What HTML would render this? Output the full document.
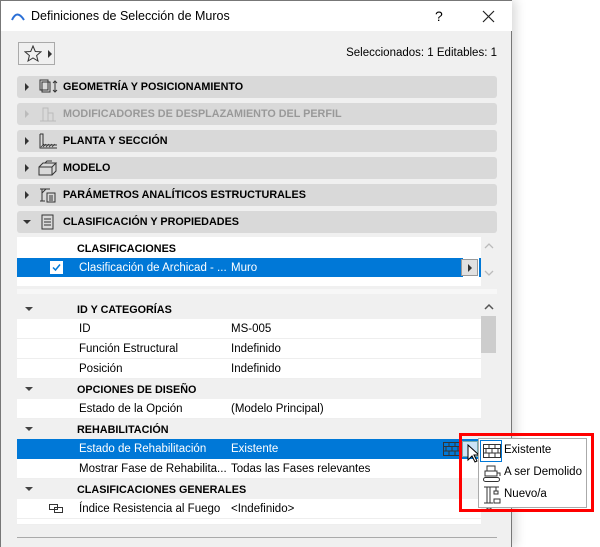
<!DOCTYPE html>
<html><head><meta charset="utf-8"><style>
*{box-sizing:border-box;margin:0;padding:0}
body{width:600px;height:547px;background:#fff;font-family:"Liberation Sans",sans-serif;font-size:11.5px;color:#000;position:relative;overflow:hidden}
.win{position:absolute;left:0;top:0;width:512px;height:547px;background:#f0f0f0;border-left:1px solid #777;border-right:1px solid #777;box-shadow:4px 0 10px rgba(0,0,0,.15)}
.title{position:absolute;left:0;top:0;width:511px;height:31px;background:#fff;border-top:1px solid #777}
.title span{position:absolute;left:30px;top:8px;font-size:12.5px}
.bar{position:absolute;left:16px;width:480px;height:22px;background:#d9d9d9;border-radius:3px;font-weight:bold;font-size:10.8px}
.bar .t{position:absolute;left:46px;top:5px}
.bar .a{position:absolute;left:8px;top:7px;width:0;height:0;border-left:4px solid #333;border-top:4px solid transparent;border-bottom:4px solid transparent}
.bar .d{position:absolute;left:6px;top:9px;border-top:4px solid #333;border-left:4px solid transparent;border-right:4px solid transparent}
.bar svg{position:absolute;left:20px;top:2px}
.row{position:absolute;left:16px;width:464px;height:20px;background:#fff;border-bottom:1px solid #eee}
.row.h{background:#f0f0f0;font-weight:bold;font-size:10.8px;border-bottom:none}
.row .l{position:absolute;left:62px;top:4px}
.row.h .l{left:60px;top:5px}
.row .v{position:absolute;left:214px;top:4px}
.row .d{position:absolute;left:8px;top:8px;border-top:4px solid #444;border-left:4px solid transparent;border-right:4px solid transparent}
.sel{background:#0078d7;color:#fff}
</style></head><body>
<div class="win">
<div class="title">
<svg style="position:absolute;left:10px;top:10px" width="14" height="10"><path d="M1 9 Q6 -2 13 9" fill="none" stroke="#2a6fd6" stroke-width="2"/></svg>
<span>Definiciones de Selección de Muros</span>
<span style="left:434px;top:7px;font-size:14px">?</span>
<svg style="position:absolute;left:481px;top:9px" width="13" height="13"><path d="M1 1L12 12M12 1L1 12" stroke="#222" stroke-width="1.2"/></svg>
</div>
<div style="position:absolute;left:17px;top:42px;width:37px;height:23px;border:1px solid #aaa;background:#f0f0f0">
<svg style="position:absolute;left:5px;top:2px" width="18" height="17"><path d="M9 1L11.3 6.5L17 6.8L12.6 10.5L14 16L9 13L4 16L5.4 10.5L1 6.8L6.7 6.5Z" fill="none" stroke="#333"/></svg>
<div style="position:absolute;left:29px;top:7px;border-left:4px solid #333;border-top:4px solid transparent;border-bottom:4px solid transparent"></div>
</div>
<div style="position:absolute;right:14px;top:47px;font-size:11.5px">Seleccionados: 1 Editables: 1</div>

<div class="bar" style="top:76px"><i class="a"></i><svg width="22" height="18"><rect x="3" y="2" width="8" height="10" fill="none" stroke="#333"/><rect x="5" y="4" width="8" height="10" fill="none" stroke="#333"/><path d="M18 3v11M16 5l2-2 2 2M16 12l2 2 2-2" stroke="#333" fill="none"/></svg><span class="t">GEOMETRÍA Y POSICIONAMIENTO</span></div>
<div class="bar" style="top:103px;color:#999"><i class="a" style="border-left-color:#bbb"></i><svg width="22" height="18"><path d="M6 16V3h5v13M11 8h5v8M3 16h16" stroke="#bbb" fill="none"/></svg><span class="t">MODIFICADORES DE DESPLAZAMIENTO DEL PERFIL</span></div>
<div class="bar" style="top:130px"><i class="a"></i><svg width="22" height="18"><path d="M3 2v14h17M3 2h3v11h14" stroke="#333" fill="none"/><path d="M4 15l3-3M6 15l3-3M9 15l3-3M12 15l3-3M15 15l3-3" stroke="#333" stroke-width=".8"/></svg><span class="t">PLANTA Y SECCIÓN</span></div>
<div class="bar" style="top:157px"><i class="a"></i><svg width="22" height="18"><path d="M2 8h13v8H2zM2 8l4-4h13l-4 4M19 4v8l-4 4M8 4l2-2h5" stroke="#333" fill="none"/></svg><span class="t">MODELO</span></div>
<div class="bar" style="top:184px"><i class="a"></i><svg width="22" height="18"><path d="M3 3h10M5 3v12M3 15h5M5 7l4-4" stroke="#333" fill="none"/><rect x="10" y="7" width="8" height="9" fill="none" stroke="#333"/><path d="M12 10h4M12 12h4M12 14h4" stroke="#333"/></svg><span class="t">PARÁMETROS ANALÍTICOS ESTRUCTURALES</span></div>
<div class="bar" style="top:211px"><i class="d"></i><svg width="22" height="18"><rect x="5" y="2" width="11" height="14" fill="none" stroke="#333"/><path d="M7 6h7M7 9h7M7 12h7" stroke="#333"/></svg><span class="t">CLASIFICACIÓN Y PROPIEDADES</span></div>

<div style="position:absolute;left:16px;top:237px;width:464px;height:49px;background:#fff"></div>
<div class="row h" style="top:238px;background:transparent"><span class="l">CLASIFICACIONES</span></div>
<div class="row sel" style="top:258px;height:19px;width:446px;border:none"><svg style="position:absolute;left:33px;top:3px" width="13" height="13"><rect x=".5" y=".5" width="12" height="12" fill="#fff" stroke="#fff"/><path d="M3 6.5l2.5 2.5L10 3.5" stroke="#0078d7" stroke-width="1.5" fill="none"/></svg><span class="l">Clasificación de Archicad - ...</span><span class="v">Muro</span></div>
<div style="position:absolute;left:460px;top:259px;width:17px;height:17px;border:1px solid #999;background:#e1e1e1"><div style="position:absolute;left:6px;top:4px;border-left:4px solid #333;border-top:4px solid transparent;border-bottom:4px solid transparent"></div></div>
<div style="position:absolute;left:478px;top:258px;width:2px;height:19px;background:#0078d7"></div>
<svg style="position:absolute;left:483px;top:242px" width="10" height="40"><path d="M1 6l4-4 4 4M1 29l4 4 4-4" stroke="#bbb" fill="none" stroke-width="1.3"/></svg>
<div style="position:absolute;left:16px;top:289px;width:480px;height:5px;background:#f7f7f7"></div>

<div class="row h" style="top:299px"><i class="d"></i><span class="l">ID Y CATEGORÍAS</span></div>
<div class="row" style="top:319px"><span class="l">ID</span><span class="v">MS-005</span></div>
<div class="row" style="top:339px"><span class="l">Función Estructural</span><span class="v">Indefinido</span></div>
<div class="row" style="top:359px"><span class="l">Posición</span><span class="v">Indefinido</span></div>
<div class="row h" style="top:379px"><i class="d"></i><span class="l">OPCIONES DE DISEÑO</span></div>
<div class="row" style="top:399px"><span class="l">Estado de la Opción</span><span class="v">(Modelo Principal)</span></div>
<div class="row h" style="top:419px"><i class="d"></i><span class="l">REHABILITACIÓN</span></div>
<div class="row sel" style="top:439px;border:none"><span class="l">Estado de Rehabilitación</span><span class="v">Existente</span>
<svg style="position:absolute;left:426px;top:3px" width="18" height="14"><rect x=".5" y=".5" width="17" height="13" fill="none" stroke="#333"/><path d="M0 4.5h18M0 9h18M6 .5v4M12 .5v4M3 4.5v4.5M9 4.5v4.5M15 4.5v4.5M6 9v4.5M12 9v4.5" stroke="#333"/></svg>
<div style="position:absolute;left:445px;top:2px;width:16px;height:16px;background:#cce4f7;border:1px solid #7aa"><div style="position:absolute;left:5px;top:3px;border-left:4px solid #333;border-top:4px solid transparent;border-bottom:4px solid transparent"></div></div>
</div>
<div class="row" style="top:459px"><span class="l">Mostrar Fase de Rehabilita...</span><span class="v">Todas las Fases relevantes</span></div>
<div class="row h" style="top:479px"><i class="d"></i><span class="l">CLASIFICACIONES GENERALES</span></div>
<div class="row" style="top:499px"><svg style="position:absolute;left:32px;top:5px" width="14" height="9"><rect x=".5" y=".5" width="8" height="5" fill="none" stroke="#333"/><rect x="5.5" y="3.5" width="8" height="5" fill="none" stroke="#333"/></svg><span class="l">Índice Resistencia al Fuego</span><span class="v">&lt;Indefinido&gt;</span></div>
<div class="row" style="top:519px;height:6px;overflow:hidden"></div>
<div style="position:absolute;left:480px;top:297px;width:16px;height:228px;background:#f0f0f0"></div>
<div style="position:absolute;left:480px;top:316px;width:15px;height:37px;background:#cdcdcd"></div>
<svg style="position:absolute;left:483px;top:301px" width="10" height="214"><path d="M1 8l4-4 4 4" stroke="#555" fill="none" stroke-width="1.5"/><path d="M1 205l4 4 4-4" stroke="#555" fill="none" stroke-width="1.5"/></svg>
<div style="position:absolute;left:16px;top:537px;width:480px;height:1px;background:#aaa"></div>
</div>

<svg style="position:absolute;left:467px;top:444px" width="14" height="20"><path d="M1 1v15l4-4 3 6 2-1-3-6h5z" fill="#fff" stroke="#000"/></svg>
<div style="position:absolute;left:459px;top:433px;width:135px;height:79px;border:3px solid #f00"></div>
<div style="position:absolute;left:478px;top:438px;width:109px;height:70px;background:#fff;border:1px solid #aaa;font-size:11.5px">
<div style="position:absolute;left:1px;top:1px;width:22px;height:22px;border:1px solid #0078d7"></div>
<svg style="position:absolute;left:4px;top:5px" width="18" height="15"><rect x=".5" y=".5" width="17" height="13" fill="none" stroke="#333"/><path d="M0 4.5h18M0 9h18M6 .5v4M12 .5v4M3 4.5v4.5M9 4.5v4.5M15 4.5v4.5M6 9v4.5M12 9v4.5" stroke="#333"/></svg>
<span style="position:absolute;left:25px;top:5px">Existente</span>
<svg style="position:absolute;left:3px;top:25px" width="20" height="20"><path d="M5 2h8v5H5zM3 7h12v5H3zM15 9h3v3" stroke="#333" fill="none"/><rect x="1.5" y="13.5" width="16" height="4" rx="2" fill="none" stroke="#333"/></svg>
<span style="position:absolute;left:25px;top:27px">A ser Demolido</span>
<svg style="position:absolute;left:3px;top:46px" width="20" height="20"><path d="M2 2h15M5 2v16M8 2v16M2 18h9M14 2v4M12 6h4v3h-4zM12 14h6v4h-6z" stroke="#333" fill="none"/></svg>
<span style="position:absolute;left:25px;top:49px">Nuevo/a</span>
</div>
</body></html>
